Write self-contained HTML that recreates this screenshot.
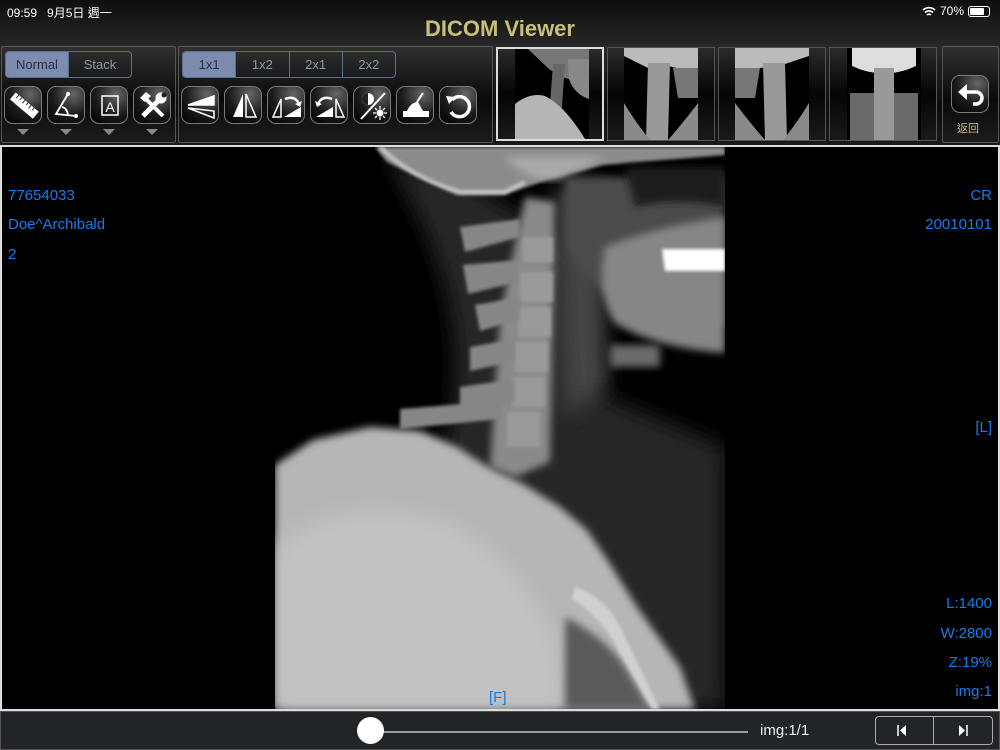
<!DOCTYPE html>
<html><head><meta charset="utf-8"><style>
*{margin:0;padding:0;box-sizing:border-box}
body{width:1000px;height:750px;overflow:hidden;background:#000;font-family:"Liberation Sans","Noto Sans CJK TC",sans-serif;position:relative}
.top{position:absolute;left:0;top:0;width:1000px;height:45px;background:linear-gradient(#0e0e0e,#262626)}
.tb{position:absolute;left:0;top:45px;width:1000px;height:100px;background:linear-gradient(#2a2a2a,#0c0c0c 60%,#1a1a1a)}
.panel{position:absolute;top:46px;height:97px;border:1px solid #555;border-radius:2px;background:linear-gradient(#303030,#0a0a0a 55%,#1c1c1c)}
.seg{position:absolute;height:27px;border:1px solid #5d6f90;border-radius:4px;display:flex;overflow:hidden}
.seg div{flex:1;color:#8c96a8;font-size:13px;text-align:center;line-height:25px;border-left:1px solid #5d6f90}
.seg div:first-child{border-left:0}
.seg .on{background:#7c8cae;color:#2a3040}
.btn{position:absolute;top:86px;width:38px;height:38px;border:1px solid #7a7a7a;border-radius:9px;background:radial-gradient(circle at 70% 20%,#666,#1a1a1a 55%,#000)}
.btn svg{position:absolute;left:0;top:0}
.tri{position:absolute;top:129px;width:0;height:0;border-left:6px solid transparent;border-right:6px solid transparent;border-top:6px solid #888}
.thumb{position:absolute;top:47px;width:108px;height:94px;border:1px solid #555;background:linear-gradient(#2a2a2a,#050505 50%,#1a1a1a);overflow:hidden}
.ov{position:absolute;color:#1a7ae8;font-size:15px}
</style></head><body>
<div class="top"></div>
<div style="position:absolute;left:7px;top:4px;color:#fff;font-size:12px">09:59&nbsp;&nbsp;&nbsp;9月5日 週一</div>
<div style="position:absolute;right:10px;top:4px;color:#fff;font-size:12px;display:flex;align-items:center;gap:4px">
<svg width="14" height="11" viewBox="0 0 14 11"><path d="M1 4a9 9 0 0 1 12 0M3 6.5a6 6 0 0 1 8 0M5 9a3 3 0 0 1 4 0" stroke="#fff" stroke-width="1.6" fill="none"/></svg>70%
<span style="display:inline-block;width:22px;height:11px;border:1px solid #fff;border-radius:3px;padding:1px"><span style="display:block;width:14px;height:7px;background:#fff;border-radius:1px"></span></span></div>
<div style="position:absolute;left:0;width:1000px;top:16px;text-align:center;color:#c7c07a;font-weight:bold;font-size:22px">DICOM Viewer</div>
<div class="tb"></div>
<div class="panel" style="left:1px;width:175px"></div>
<div class="panel" style="left:178px;width:315px"></div>
<div class="panel" style="left:942px;width:57px"></div>
<div class="seg" style="left:5px;top:51px;width:127px"><div class="on">Normal</div><div>Stack</div></div>
<div class="seg" style="left:182px;top:51px;width:214px"><div class="on">1x1</div><div>1x2</div><div>2x1</div><div>2x2</div></div>
<div class="btn" style="left:4px"><svg width="38" height="38"><g transform="rotate(40 19 19)"><rect x="4" y="14" width="30" height="9" fill="#fff"/><path d="M8 14v4M12 14v3M16 14v4M20 14v3M24 14v4M28 14v3" stroke="#333" stroke-width="1"/></g></svg></div>
<div class="btn" style="left:47px"><svg width="38" height="38"><path d="M20 7L8 27L28 29M14 20q5 1 6 8" stroke="#fff" stroke-width="1.8" fill="none"/><circle cx="20" cy="7" r="2" fill="#fff"/><circle cx="28" cy="29" r="2" fill="#fff"/></svg></div>
<div class="btn" style="left:90px"><svg width="38" height="38"><rect x="11" y="9" width="16" height="19" stroke="#fff" stroke-width="1.5" fill="none"/><text x="19" y="25" fill="#fff" font-size="14" text-anchor="middle" font-family="Liberation Sans">A</text></svg></div>
<div class="btn" style="left:133px"><svg width="38" height="38"><path d="M9 29L25 13" stroke="#fff" stroke-width="5"/><path d="M11 11l18 18" stroke="#fff" stroke-width="4"/><path d="M6 11l6-6 5 4-6 6z" fill="#fff"/><circle cx="27" cy="11" r="5.5" fill="#fff"/><circle cx="30" cy="8" r="2.5" fill="#222"/></svg></div>
<div class="tri" style="left:17px"></div><div class="tri" style="left:60px"></div><div class="tri" style="left:103px"></div><div class="tri" style="left:146px"></div>
<div class="btn" style="left:181px"><svg width="38" height="38"><path d="M32 9L6 18h26zM6 21l26 3v7z" fill="none" stroke="#fff" stroke-width="1.5"/><path d="M32 9L6 18h26z" fill="#fff"/></svg></div>
<div class="btn" style="left:224px"><svg width="38" height="38"><path d="M18 7L8 30h10z" fill="#fff"/><path d="M21 7l10 23H21z" fill="none" stroke="#fff" stroke-width="1.5"/></svg></div>
<div class="btn" style="left:267px"><svg width="38" height="38"><path d="M13 12L5 30h8z" fill="none" stroke="#fff" stroke-width="1.5"/><path d="M16 30L33 30L33 20z" fill="#fff"/><path d="M17 12q10-4 14 5" stroke="#fff" stroke-width="2.5" fill="none"/><path d="M27 17l5 3 2-6z" fill="#fff"/></svg></div>
<div class="btn" style="left:310px"><svg width="38" height="38"><path d="M25 12l8 18h-8z" fill="none" stroke="#fff" stroke-width="1.5"/><path d="M22 30L5 30L22 20z" fill="#fff"/><path d="M21 12q-10-4-14 5" stroke="#fff" stroke-width="2.5" fill="none"/><path d="M11 17l-5 3-2-6z" fill="#fff"/></svg></div>
<div class="btn" style="left:353px"><svg width="38" height="38"><circle cx="14" cy="12" r="6" fill="#fff"/><path d="M14 6a6 6 0 0 0 0 12z" fill="#222"/><path d="M7 32L31 6" stroke="#fff" stroke-width="2"/><circle cx="26" cy="26" r="3.5" fill="#fff"/><path d="M26 19v3M26 30v3M19 26h3M30 26h3M21 21l2 2M29 29l2 2M21 31l2-2M29 23l2-2" stroke="#fff" stroke-width="1.3"/></svg></div>
<div class="btn" style="left:396px"><svg width="38" height="38"><path d="M6 24h26v6H6z" fill="#fff"/><path d="M10 24q4-9 11-9l5 9z" fill="#fff"/><path d="M20 15l6-9" stroke="#fff" stroke-width="2"/></svg></div>
<div class="btn" style="left:439px"><svg width="38" height="38"><path d="M12 13a10 10 0 1 1-1 12" stroke="#fff" stroke-width="3.5" fill="none"/><path d="M6 9l9 1-6 7z" fill="#fff"/></svg></div>
<div class="thumb" style="left:496px;border:2px solid #ddd"><svg width="104" height="90" viewBox="0 0 104 90"><rect x="17" y="0" width="74" height="90" fill="#000"/><path d="M17 0h74v30q-20 5-40-10L30 0z" fill="#777"/><path d="M55 15l12 0-5 70-12-3z" fill="#666"/><path d="M17 90V55q15-12 30-8 20 10 40 43z" fill="#b5b5b5"/><path d="M70 10h21v40q-15-5-20-20z" fill="#888"/></svg></div>
<div class="thumb" style="left:607px"><svg width="106" height="92"><rect x="16" y="0" width="74" height="92" fill="#000"/><path d="M16 0h74v25L60 18 40 20 16 8z" fill="#bbb"/><path d="M40 15l22 0-2 77H38z" fill="#999"/><path d="M16 55q12 20 26 37H16zM90 55q-15 20-30 37h30z" fill="#8a8a8a"/><path d="M65 20h25v30H70z" fill="#777"/></svg></div>
<div class="thumb" style="left:718px"><svg width="106" height="92"><rect x="16" y="0" width="74" height="92" fill="#000"/><path d="M16 0h74v8L60 18 40 20 16 25z" fill="#bbb"/><path d="M44 15l22 0 2 77H46z" fill="#999"/><path d="M16 55q15 20 30 37H16zM90 55q-12 20-26 37h26z" fill="#8a8a8a"/><path d="M16 20h25l-5 30H16z" fill="#777"/></svg></div>
<div class="thumb" style="left:829px"><svg width="106" height="92"><rect x="17" y="0" width="74" height="92" fill="#000"/><path d="M22 0h64v18q-32 15-64 0z" fill="#ddd"/><path d="M44 20h20v72H44z" fill="#999"/><path d="M20 45h68v47H20z" fill="#6a6a6a"/><path d="M44 45h20v47H44z" fill="#999"/></svg></div>
<div class="btn" style="left:951px;top:75px;border-radius:9px"><svg width="38" height="38"><path d="M12 16h12a6 6 0 0 1 0 12h-3" stroke="#fff" stroke-width="3.5" fill="none"/><path d="M6 16l9-8v16z" fill="#fff"/></svg></div>
<div style="position:absolute;left:957px;top:120px;color:#c7c07a;font-size:11px">返回</div>
<div style="position:absolute;left:0;top:145px;width:1000px;height:566px;border:2px solid #ddd;background:#000;overflow:hidden">
<svg width="996" height="562" style="position:absolute;left:0;top:0">
<defs><filter id="b" x="-50%" y="-50%" width="200%" height="200%"><feGaussianBlur stdDeviation="10"/></filter><filter id="b2" x="-20%" y="-20%" width="140%" height="140%"><feGaussianBlur stdDeviation="4"/></filter><filter id="b1"><feGaussianBlur stdDeviation="1.5"/></filter>
<clipPath id="c"><rect x="0" y="0" width="450" height="562"/></clipPath></defs>
<g transform="translate(273,0)" clip-path="url(#c)">
<path d="M110 10q40 60 60 130q20 80 0 160L0 330V562h450V300L330 250 300 100 200 40z" fill="#262626" filter="url(#b)"/>
<path d="M280 40h50v200l-40 30z" fill="#444" filter="url(#b)"/>
<path d="M0 318L38 293 95 280 145 284 182 300 208 317 248 337 285 360 312 383 335 417 362 460 405 520 420 562H0z" fill="#b6b6b6" filter="url(#b2)"/>
<path d="M0 400q80-60 180-20q60 30 100 110L290 562H0z" fill="#c2c2c2" filter="url(#b)"/>
<path d="M290 470q40 20 60 50l25 42h-85z" fill="#5a5a5a" filter="url(#b2)"/>
<path d="M300 440q30 10 45 40l40 82h-8l-40-70q-15-25-40-40z" fill="#d0d0d0" filter="url(#b1)"/>
<path d="M100 0H450V8L328 18 278 31 228 48 182 48 155 35 112 15z" fill="#8c8c8c" filter="url(#b1)"/>
<path d="M105 0q30 30 80 45l45 0 20-10" stroke="#c8c8c8" stroke-width="4" fill="none" filter="url(#b1)"/>
<path d="M230 10q30 30 60 20l40-20z" fill="#aaa" filter="url(#b2)"/>
<path d="M290 30h160v150q-60-10-110-30-40-20-50-60z" fill="#4c4c4c" filter="url(#b2)"/>
<path d="M330 100q50-20 120-30v136q-70-5-110-30q-20-30-10-76z" fill="#868686" filter="url(#b2)"/>
<path d="M350 20h100v40q-50-10-90 0z" fill="#1e1e1e" filter="url(#b2)"/>
<path d="M387 102h63v22h-60z" fill="#fff" filter="url(#b1)"/>
<path d="M335 198h50v22h-50z" fill="#6a6a6a" filter="url(#b2)"/>
<path d="M250 50l30 5-5 260-35 15-25-10 10-150z" fill="#8a8a8a" filter="url(#b2)"/>
<path d="M248 90h30v25h-30zM245 125h33v30h-33zM243 160h33v30h-33zM240 195h33v30h-33zM237 230h33v30h-33zM232 265h33v35h-33z" fill="#9a9a9a" filter="url(#b1)"/>
<path d="M185 80l60-8 0 18-55 15zM188 118l55-5 0 22-50 12zM200 158l45-8v22l-40 12zM195 200l45-8v22l-45 10zM185 240l55-8v22l-55 10zM125 262l100-8v18l-100 10z" fill="#868686" filter="url(#b1)"/>
</g>
</svg>
<div class="ov" style="left:6px;top:40px">77654033</div>
<div class="ov" style="left:6px;top:69px">Doe^Archibald</div>
<div class="ov" style="left:6px;top:99px">2</div>
<div class="ov" style="right:6px;top:40px">CR</div>
<div class="ov" style="right:6px;top:69px">20010101</div>
<div class="ov" style="right:6px;top:272px">[L]</div>
<div class="ov" style="right:6px;top:448px">L:1400</div>
<div class="ov" style="right:6px;top:478px">W:2800</div>
<div class="ov" style="right:6px;top:507px">Z:19%</div>
<div class="ov" style="right:6px;top:536px">img:1</div>
<div class="ov" style="left:487px;top:542px">[F]</div>
</div>
<div style="position:absolute;left:0;top:711px;width:1000px;height:39px;background:#232427;border:1px solid #555"></div>
<div style="position:absolute;left:372px;top:731px;width:376px;height:2px;background:#999"></div>
<div style="position:absolute;left:357px;top:717px;width:27px;height:27px;border-radius:50%;background:#fff"></div>
<div style="position:absolute;left:760px;top:722px;color:#eee;font-size:15px">img:1/1</div>
<div style="position:absolute;left:875px;top:716px;width:118px;height:29px;border:1px solid #aaa;border-radius:4px"></div>
<div style="position:absolute;left:933px;top:716px;width:1px;height:29px;background:#aaa"></div>
<svg style="position:absolute;left:895px;top:723px" width="16" height="15"><path d="M3 2v11" stroke="#fff" stroke-width="1.5"/><path d="M11 2L5 7.5 11 13z" fill="#fff"/></svg>
<svg style="position:absolute;left:955px;top:723px" width="16" height="15"><path d="M12 2v11" stroke="#fff" stroke-width="1.5"/><path d="M4 2l6 5.5L4 13z" fill="#fff"/></svg>
</body></html>
